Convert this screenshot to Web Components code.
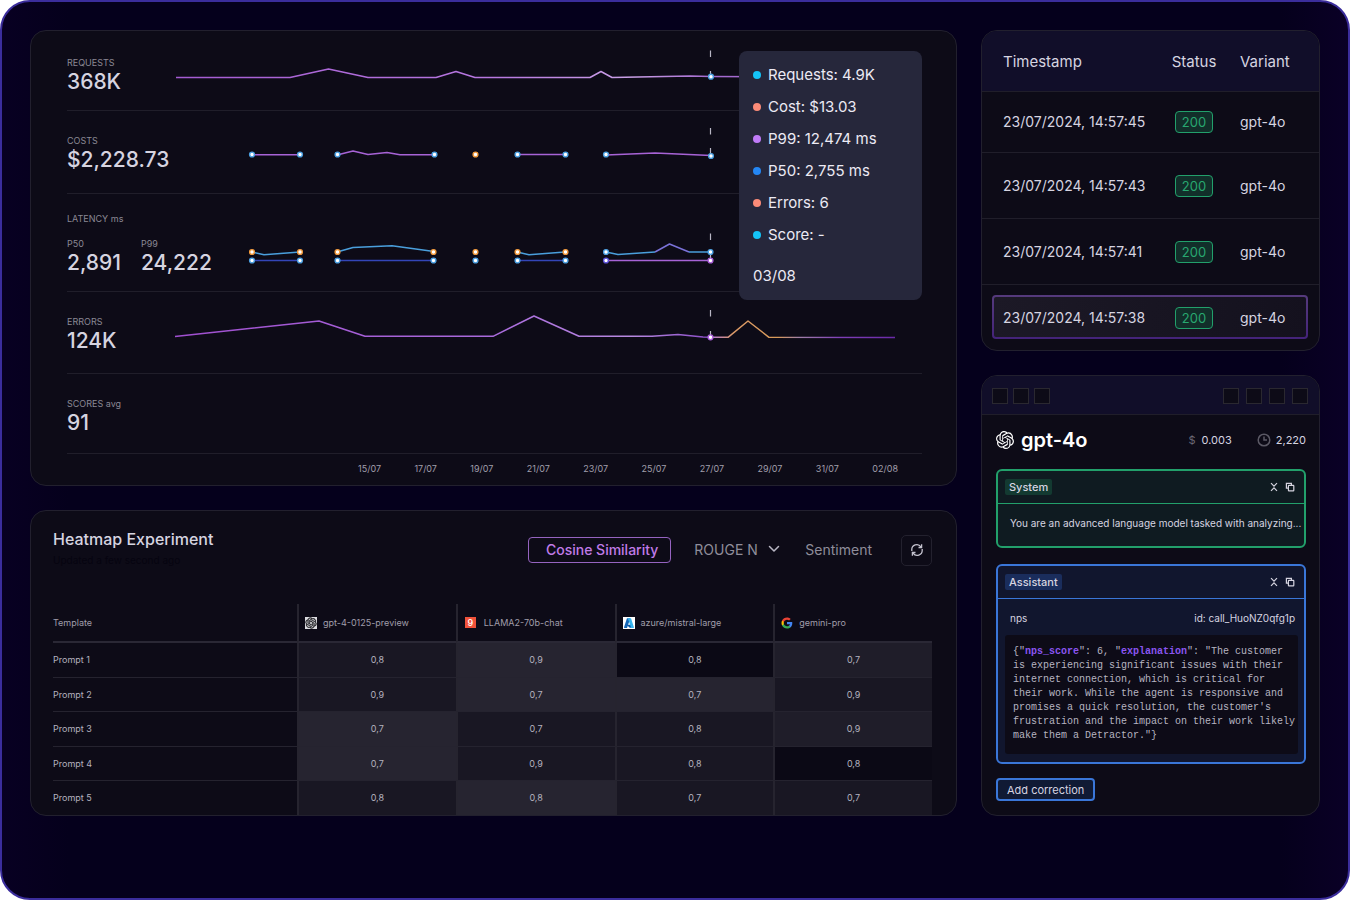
<!DOCTYPE html>
<html lang="en">
<head>
<meta charset="utf-8">
<meta name="viewport" content="width=device-width, initial-scale=1">
<title>LLM monitoring</title>
<style>
  :root {
    --panel: #0d0b17;
    --panel-head: #110e29;
    --line: #201e2a;
    --ink: #d6d4e0;
    --muted: #a09eab;
    --dim: #8a8894;
    --purple: #c07be8;
    --green: #22a06b;
    --blue: #3a76d8;
    --font: Inter, "Liberation Sans", sans-serif;
    --font-mono: "Liberation Mono", monospace;
  }

  body {
    margin: 0;
    background: #fff;
    color: var(--ink);
    font-family: var(--font);
  }
</style>
</head>
<body>
<app-frame>
  <metrics-panel slot="main"></metrics-panel>
  <heatmap-panel slot="main" fill></heatmap-panel>
  <requests-panel slot="side"></requests-panel>
  <trace-panel slot="side" fill></trace-panel>
</app-frame>

<script>
/* Registers an element whose shadow root is cloned from the given markup. */
function component(name, html, setup) {
  if (customElements.get(name)) return;
  const template = document.createElement("template");
  template.innerHTML = html;

  customElements.define(name, class extends HTMLElement {
    connectedCallback() {
      if (this.shadowRoot) return;
      const root = this.attachShadow({ mode: "open" });
      root.append(template.content.cloneNode(true));
      if (setup) setup(root, this);
    }
  });
}

const OPENAI = "M22.2819 9.8211a5.9847 5.9847 0 0 0-.5157-4.9108 6.0462 6.0462 0 0 0-6.5098-2.9A6.0651 6.0651 0 0 0 4.9807 4.1818a5.9847 5.9847 0 0 0-3.9977 2.9 6.0462 6.0462 0 0 0 .7427 7.0966 5.98 5.98 0 0 0 .511 4.9107 6.051 6.051 0 0 0 6.5146 2.9001A5.9847 5.9847 0 0 0 13.2599 24a6.0557 6.0557 0 0 0 5.7718-4.2058 5.9894 5.9894 0 0 0 3.9977-2.9001 6.0557 6.0557 0 0 0-.7475-7.0729zm-9.022 12.6081a4.4755 4.4755 0 0 1-2.8764-1.0408l.1419-.0804 4.7783-2.7582a.7948.7948 0 0 0 .3927-.6813v-6.7369l2.02 1.1686a.071.071 0 0 1 .038.052v5.5826a4.504 4.504 0 0 1-4.4945 4.4944zm-9.6607-4.1254a4.4708 4.4708 0 0 1-.5346-3.0137l.142.0852 4.783 2.7582a.7712.7712 0 0 0 .7806 0l5.8428-3.3685v2.3324a.0804.0804 0 0 1-.0332.0615L9.74 19.9502a4.4992 4.4992 0 0 1-6.1408-1.6464zM2.3408 7.8956a4.485 4.485 0 0 1 2.3655-1.9728V11.6a.7664.7664 0 0 0 .3879.6765l5.8144 3.3543-2.0201 1.1685a.0757.0757 0 0 1-.071 0l-4.8303-2.7865A4.504 4.504 0 0 1 2.3408 7.872zm16.5963 3.8558L13.1038 8.364 15.1192 7.2a.0757.0757 0 0 1 .071 0l4.8303 2.7913a4.4944 4.4944 0 0 1-.6765 8.1042v-5.6772a.79.79 0 0 0-.407-.667zm2.0107-3.0231l-.142-.0852-4.7735-2.7818a.7759.7759 0 0 0-.7854 0L9.409 9.2297V6.8974a.0662.0662 0 0 1 .0284-.0615l4.8303-2.7866a4.4992 4.4992 0 0 1 6.6802 4.66zM8.3065 12.863l-2.02-1.1638a.0804.0804 0 0 1-.038-.0567V6.0742a4.4992 4.4992 0 0 1 7.3757-3.4537l-.142.0805L8.704 5.459a.7948.7948 0 0 0-.3927.6813zm1.0976-2.3654l2.602-1.4998 2.6069 1.4998v2.9994l-2.5974 1.4997-2.6067-1.4997Z";

const ICONS = {
  openai: `<svg viewBox="0 0 24 24"><path fill="#fff" d="${OPENAI}"/></svg>`,
  gpt: `<svg viewBox="0 0 24 24"><rect width="24" height="24" fill="#dcdce0"/><path fill="#15151a" stroke="#15151a" stroke-width=".6" transform="translate(1 1) scale(.92)" d="${OPENAI}"/></svg>`,
  azure: `<svg viewBox="0 0 24 24">
    <rect width="24" height="24" fill="#fff"/>
    <path fill="#1467b8" d="M8.6 2.5h6L8.4 21.2a1 1 0 0 1-.9.7H3a1 1 0 0 1-.9-1.3L7.7 3.2a1 1 0 0 1 .9-.7z"/>
    <path fill="#0b5aa8" d="M16.5 15.5H8.6l-.4 1 5.3 5.2h5z"/>
    <path fill="#35b4ee" d="M16.2 3.2a1 1 0 0 0-.9-.7H9.5l6.4 18.1a1 1 0 0 1-.9 1.3h5.9a1 1 0 0 0 .9-1.3z"/></svg>`,
  google: `<svg viewBox="0 0 24 24">
    <path fill="#4285f4" d="M22.56 12.25c0-.78-.07-1.53-.2-2.25H12v4.26h5.92c-.26 1.37-1.04 2.53-2.21 3.31v2.77h3.57c2.08-1.92 3.28-4.74 3.28-8.09z"/>
    <path fill="#34a853" d="M12 23c2.97 0 5.46-.98 7.28-2.66l-3.57-2.77c-.98.66-2.23 1.06-3.71 1.06-2.86 0-5.29-1.93-6.16-4.53H2.18v2.84C3.99 20.53 7.7 23 12 23z"/>
    <path fill="#fbbc05" d="M5.84 14.09c-.22-.66-.35-1.36-.35-2.09s.13-1.43.35-2.09V7.07H2.18C1.43 8.55 1 10.22 1 12s.43 3.45 1.18 4.93l3.66-2.84z"/>
    <path fill="#ea4335" d="M12 5.38c1.62 0 3.06.56 4.21 1.64l3.15-3.15C17.45 2.09 14.97 1 12 1 7.7 1 3.99 3.47 2.18 7.07l3.66 2.84c.87-2.6 3.3-4.53 6.16-4.53z"/></svg>`,
  chevron: `<svg viewBox="0 0 12 12" fill="none" stroke="#b9b7c4" stroke-width="1.5" stroke-linecap="round" stroke-linejoin="round"><path d="M1.5 2.5 6 7l4.5-4.5"/></svg>`,
  refresh: `<svg viewBox="0 0 14 14" fill="none" stroke="#c4c2ce" stroke-width="1.3">
    <path d="M1.8 8V7A5 5 0 0 1 10.9 3.8M12.2 6V7A5 5 0 0 1 3.1 10.2"/>
    <path d="M11.6 1.2v3.3H8.5M2.4 12.8V9.5H5.5"/></svg>`,
  collapse: `<svg viewBox="0 0 10 10" fill="none" stroke="#d6d4e0" stroke-width="1.2"><path d="M2 1.2 5 4.2 8 1.2M2 8.8 5 5.8 8 8.8"/></svg>`,
  copy: `<svg viewBox="0 0 10 10" fill="none" stroke="#d6d4e0" stroke-width="1.2"><rect x="3.4" y="3.4" width="5.4" height="5.4" rx=".6"/><path d="M3.2 6.2H1.4V1.4h5v1.7"/></svg>`,
  clock: `<svg viewBox="0 0 14 14" fill="none" stroke="#5b5965" stroke-width="1.5"><circle cx="7" cy="7" r="5.8"/><path d="M7 3.5V7h3"/></svg>`
};

component("app-icon", `
  <style>
    :host { display: inline-block; flex: none; width: 12px; height: 12px; }
    svg { display: block; width: 100%; height: 100%; }
  </style>
`, (root, el) => {
  root.innerHTML += ICONS[el.getAttribute("name")] ?? "";
});

component("app-frame", `
  <style>
    :host {
      display: block;
      box-sizing: border-box;
      min-height: 100vh;
      padding: 28px;
      border: 2px solid #3b2d9c;
      border-radius: 30px;
      background: linear-gradient(90deg, #080022, #05001c 5%, #05001c 95%, #0a0026);
    }
    .grid {
      display: grid;
      grid-template-columns: minmax(0, 1fr) 339px;
      gap: 24px;
    }
    .col { display: flex; flex-direction: column; gap: 24px; min-width: 0; }
    ::slotted([fill]) { flex: 1; }
  </style>
  <div class="grid">
    <div class="col"><slot name="main"></slot></div>
    <div class="col"><slot name="side"></slot></div>
  </div>
`);

component("ui-panel", `
  <style>
    :host {
      display: block;
      box-sizing: border-box;
      overflow: hidden;
      border: 1px solid #22202e;
      border-radius: 16px;
      background: var(--panel);
    }
  </style>
  <slot></slot>
`);

/* One line of the overview: slotted figures on the left, a chart behind them. */
component("metric-row", `
  <style>
    :host {
      display: grid;
      border-bottom: 1px solid var(--line);
    }
    .head { grid-area: 1 / 1; padding-top: 23px; }
    :host([first]) .head { padding-top: 25px; }
    :host([split]) .head { padding-top: 18px; }
    .label { color: var(--dim); font-size: 9px; line-height: 14px; }
    :host([split]) .label { padding-bottom: 11px; }
    ::slotted(svg) { grid-area: 1 / 1; display: block; width: 100%; height: auto; }
  </style>
  <slot name="chart"></slot>
  <div class="head">
    <div class="label"></div>
    <slot></slot>
  </div>
`, (root, el) => {
  root.querySelector(".label").textContent = el.getAttribute("label");
});

component("big-number", `
  <style>
    :host { display: block; color: var(--ink); font-size: 21px; font-weight: 500; line-height: 24px; }
  </style>
  <slot></slot>
`);

component("chart-tooltip", `
  <style>
    :host {
      display: block;
      box-sizing: border-box;
      width: 183px;
      padding: 8px 14px;
      border-radius: 8px;
      background: #26273b;
      color: #eceaf4;
      font-size: 15px;
      line-height: 32px;
    }
    ul { margin: 0; padding: 0; list-style: none; }
    li { display: flex; align-items: center; gap: 7px; }
    li::before { content: ""; width: 8px; height: 8px; border-radius: 50%; background: var(--dot); }
    p { margin: 9px 0 0; }
  </style>
  <ul>
    <li style="--dot: #14c4f8">Requests: 4.9K</li>
    <li style="--dot: #fb8b78">Cost: $13.03</li>
    <li style="--dot: #c07bf8">P99: 12,474 ms</li>
    <li style="--dot: #2487f5">P50: 2,755 ms</li>
    <li style="--dot: #fb8b78">Errors: 6</li>
    <li style="--dot: #14c4f8">Score: -</li>
  </ul>
  <p>03/08</p>
`);

component("metrics-panel", `
  <style>
    :host { display: block; position: relative; }
    .rows { padding: 0 34px 0 36px; }
    .pair { display: flex; gap: 20px; }
    .pair span { display: block; color: var(--dim); font-size: 9px; line-height: 14px; }
    .axis {
      display: flex;
      justify-content: space-between;
      padding: 8px 24px 9px 291px;
      color: var(--muted);
      font-size: 9px;
      line-height: 14px;
    }
    chart-tooltip { position: absolute; top: 21px; right: 35px; }
    polyline { fill: none; stroke-width: 1.5; stroke-linejoin: round; }
    .p { stroke: #a763d6; }
    .c { stroke: #4a9fdc; }
    .i { stroke: #3345b8; }
    .cursor { stroke: #b8b6c4; stroke-width: 1.2; }
    circle { r: 2.4px; fill: #fff; stroke: #4a9fe0; stroke-width: 1.4; }
    circle.o { stroke: #f0983a; }
    circle.v { stroke: #a95fd8; }
    circle.n { stroke: #5a50d8; }
  </style>
  <ui-panel>
    <div class="rows">
      <metric-row label="REQUESTS" first>
        <big-number>368K</big-number>
        <svg slot="chart" viewBox="0 0 855 79">
          <defs>
            <linearGradient id="main" gradientUnits="userSpaceOnUse" x1="108" y1="0" x2="644" y2="0">
              <stop stop-color="#a45bd2"/><stop offset=".6" stop-color="#b778e0"/><stop offset=".85" stop-color="#c9a0e6"/><stop offset="1" stop-color="#a46ad0"/>
            </linearGradient>
          </defs>
          <polyline stroke="url(#main)" points="109,46.5 223,46.5 261.5,38 301,46.5 369,46.5 389,40.5 408,46.5 523,46.5 534,40.5 545,46.5 623,45 644,45.5 720,46"/>
          <path class="cursor" d="M643.5 19.5v6.5M643.5 40v5"/>
          <circle cx="644" cy="45.7"/>
        </svg>
      </metric-row>
      <metric-row label="COSTS">
        <big-number>$2,228.73</big-number>
        <svg slot="chart" viewBox="0 0 855 82">
          <polyline class="p" points="185,43.7 233,43.7"/>
          <polyline class="p" points="270,44 286,40 301,43.5 320,41.5 333,43.7 367,43.7"/>
          <polyline class="p" points="450,43.5 498,43.5"/>
          <polyline class="p" points="539,44 588,42 644,44.5"/>
          <path class="cursor" d="M643.5 17v6.5M643.5 37v7"/>
          <circle cx="185" cy="43.5"/><circle cx="233" cy="43.5"/>
          <circle cx="270.5" cy="43.5"/><circle cx="367.5" cy="43.5"/>
          <circle class="o" cx="408.5" cy="43.5"/>
          <circle cx="450.5" cy="43.5"/><circle cx="498.5" cy="43.5"/>
          <circle cx="539" cy="43.5"/><circle cx="644" cy="45"/>
        </svg>
      </metric-row>
      <metric-row label="LATENCY ms" split>
        <div class="pair">
          <div><span>P50</span><big-number>2,891</big-number></div>
          <div><span>P99</span><big-number>24,222</big-number></div>
        </div>
        <svg slot="chart" viewBox="0 0 855 97">
          <polyline class="c" points="185,58 197,60.7 233,58"/><polyline class="i" points="185,66.5 233,66.5"/>
          <polyline class="c" points="270,58 286,53.5 325,51.7 367,57.5"/><polyline class="i" points="270,66.5 367,66.5"/>
          <polyline class="c" points="450,58 462,60.7 498,58"/><polyline class="i" points="450,66.5 498,66.5"/>
          <polyline class="c" points="539,58 551,60.5 588,58"/>
          <polyline class="c" points="622,58 644,58"/>
          <polyline stroke="#7a72d8" points="588,58 602.5,50 622,58"/>
          <polyline class="p" points="539,66.5 644,66.5"/>
          <path class="cursor" d="M643.5 39.5v6.5M643.5 60v6"/>
          <circle class="o" cx="185" cy="58"/><circle class="o" cx="233" cy="58"/><circle cx="185" cy="66.5"/><circle cx="233" cy="66.5"/>
          <circle class="o" cx="270.5" cy="58"/><circle class="o" cx="366.5" cy="58"/><circle cx="270.5" cy="66.5"/><circle cx="366.5" cy="66.5"/>
          <circle class="o" cx="408.5" cy="58"/><circle cx="408.5" cy="66.5"/>
          <circle class="o" cx="450.5" cy="58"/><circle class="o" cx="498.5" cy="58"/><circle cx="450.5" cy="66.5"/><circle cx="498.5" cy="66.5"/>
          <circle cx="539" cy="58"/><circle cx="643.5" cy="58"/><circle class="n" cx="539" cy="66.5"/><circle class="v" cx="643.5" cy="66.5"/>
        </svg>
      </metric-row>
      <metric-row label="ERRORS">
        <big-number>124K</big-number>
        <svg slot="chart" viewBox="0 0 855 81">
          <defs>
            <linearGradient id="tail" gradientUnits="userSpaceOnUse" x1="644" y1="0" x2="828" y2="0">
              <stop stop-color="#b078d8"/><stop offset=".12" stop-color="#dc9a68"/><stop offset=".36" stop-color="#d89a58"/><stop offset=".48" stop-color="#a080a8"/><stop offset=".7" stop-color="#7f3fb8"/><stop offset="1" stop-color="#6a2aa8"/>
            </linearGradient>
            <linearGradient id="err" gradientUnits="userSpaceOnUse" x1="108" y1="0" x2="644" y2="0">
              <stop stop-color="#a04fd0"/><stop offset=".6" stop-color="#a96bdc"/><stop offset=".85" stop-color="#b78ae0"/><stop offset="1" stop-color="#8a4cc8"/>
            </linearGradient>
          </defs>
          <polyline stroke="url(#err)" points="108,44.5 252,29 298,44.3 426,44.3 467,24 512,44.3 585,44.3 611,42.5 636,45 644,45.3"/>
          <polyline stroke="url(#tail)" points="644,45.3 661,45.3 681,29 702,45.3 828,45.4"/>
          <path class="cursor" d="M643.5 18v6.5M643.5 39v5"/>
          <circle class="v" cx="643.5" cy="45.3"/>
        </svg>
      </metric-row>
      <metric-row label="SCORES avg">
        <big-number>91</big-number>
        <svg slot="chart" viewBox="0 0 855 79"></svg>
      </metric-row>
      <div class="axis">
        <span>15/07</span><span>17/07</span><span>19/07</span><span>21/07</span><span>23/07</span>
        <span>25/07</span><span>27/07</span><span>29/07</span><span>31/07</span><span>02/08</span>
      </div>
    </div>
  </ui-panel>
  <chart-tooltip></chart-tooltip>
`);

/* Score per prompt and model. Each cell is [score, shade 0-3]. */
const HEATMAP = [
  ["Prompt 1", ["0,8", 1], ["0,9", 3], ["0,8", 0], ["0,7", 2]],
  ["Prompt 2", ["0,9", 1], ["0,7", 3], ["0,7", 3], ["0,9", 1]],
  ["Prompt 3", ["0,7", 3], ["0,7", 1], ["0,8", 1], ["0,9", 2]],
  ["Prompt 4", ["0,7", 3], ["0,9", 1], ["0,8", 1], ["0,8", 0]],
  ["Prompt 5", ["0,8", 1], ["0,8", 3], ["0,7", 1], ["0,7", 1]]
];

component("heatmap-panel", `
  <style>
    :host { display: flex; }
    ui-panel { flex: 1; min-width: 0; padding: 18px 24px 0 22px; }
    header { display: flex; justify-content: space-between; }
    h2 { margin: 0; font-size: 16px; font-weight: 500; line-height: 20px; }
    header p { margin: 4px 0 0; color: #060410; font-size: 10px; line-height: 14px; }
    .tools { display: flex; align-items: center; padding-top: 4px; }
    button, select {
      margin: 0;
      padding: 0;
      border: 0;
      background: none;
      color: #8f8d9a;
      font: 400 14px/20px var(--font);
    }
    .tools .active {
      height: 26px;
      padding: 0 12px 0 17px;
      border: 1px solid #9563c0;
      border-radius: 4px;
      color: var(--purple);
      font-weight: 500;
    }
    label { display: grid; align-items: center; margin: 0 25px 0 23px; }
    select { grid-area: 1 / 1; appearance: none; padding-right: 22px; }
    label app-icon { grid-area: 1 / 1; justify-self: end; pointer-events: none; }
    .tools .refresh {
      display: grid;
      place-items: center;
      width: 31px;
      height: 31px;
      margin-left: 29px;
      border: 1px solid #23212e;
      border-radius: 5px;
    }
    .refresh app-icon { width: 14px; height: 14px; }
    table {
      width: 100%;
      margin-top: 37px;
      border-spacing: 0;
      table-layout: fixed;
      color: #b4b2bf;
      font-size: 9px;
      line-height: 12px;
    }
    th { padding: 0; font-weight: 400; text-align: left; }
    th:first-child { width: 244px; }
    thead th { height: 37px; border-bottom: 2px solid #2a2835; color: #a09eab; }
    thead th + th, td { border-left: 2px solid #26242f; }
    tbody th, td { height: 34px; padding: 0; border-bottom: 1px solid #25232f; }
    tbody tr:nth-child(even) > * { height: 33px; }
    tbody tr:last-child > * { border-bottom: 0; }
    td { text-align: center; }
    .model { display: flex; align-items: center; gap: 6px; padding-left: 6px; }
    .model b {
      width: 11px;
      height: 11px;
      margin: 0 2px 0 1px;
      background: #f0523a;
      color: #fff;
      font-size: 9px;
      font-weight: 500;
      line-height: 11px;
      text-align: center;
    }
    .s0 { background: #0b0915; }
    .s1 { background: #191723; }
    .s2 { background: #1f1d29; }
    .s3 { background: #262430; }
  </style>
  <ui-panel>
    <header>
      <div>
        <h2>Heatmap Experiment</h2>
        <p>Updated a few second ago</p>
      </div>
      <div class="tools">
        <button class="active" type="button">Cosine Similarity</button>
        <label><select aria-label="ROUGE metric"><option>ROUGE N</option></select><app-icon name="chevron"></app-icon></label>
        <button type="button">Sentiment</button>
        <button class="refresh" type="button" aria-label="Refresh"><app-icon name="refresh"></app-icon></button>
      </div>
    </header>
    <table>
      <thead>
        <tr>
          <th scope="col">Template</th>
          <th scope="col"><div class="model"><app-icon name="gpt"></app-icon>gpt-4-0125-preview</div></th>
          <th scope="col"><div class="model"><b>9</b>LLAMA2-70b-chat</div></th>
          <th scope="col"><div class="model"><app-icon name="azure"></app-icon>azure/mistral-large</div></th>
          <th scope="col"><div class="model"><app-icon name="google"></app-icon>gemini-pro</div></th>
        </tr>
      </thead>
      <tbody></tbody>
    </table>
  </ui-panel>
`, (root) => {
  root.querySelector("tbody").innerHTML = HEATMAP.map(([name, ...cells]) =>
    `<tr><th scope="row">${name}</th>${cells.map(([v, s]) => `<td class="s${s}">${v}</td>`).join("")}</tr>`
  ).join("");
});

component("status-badge", `
  <style>
    :host {
      display: inline-block;
      box-sizing: border-box;
      width: 38px;
      border: 1px solid var(--green);
      border-radius: 4px;
      background: #122f2a;
      color: #28a870;
      font-size: 13px;
      line-height: 20px;
      text-align: center;
      vertical-align: middle;
    }
  </style>
  <slot></slot>
`);

component("requests-panel", `
  <style>
    :host { display: block; }
    table {
      width: 100%;
      border-spacing: 0;
      table-layout: fixed;
      font-size: 14px;
      line-height: 20px;
      white-space: nowrap;
    }
    th, td { height: 65px; padding: 0; border-bottom: 1px solid var(--line); font-weight: 400; text-align: left; }
    th { height: 58px; padding-top: 2px; background: var(--panel-head); font-size: 15px; }
    tbody tr:first-child td { height: 60px; }
    tbody tr:last-child td { height: 65px; border-bottom: 0; }
    th:nth-child(1) { width: 182px; }
    th:nth-child(2) { width: 60px; }
    tr > :nth-child(1) { box-sizing: border-box; padding-left: 21px; }
    tr > :nth-child(2) { text-align: center; }
    tr > :nth-child(3) { padding-left: 16px; }
    .selected { position: relative; z-index: 0; }
    .selected td:first-child::before {
      content: "";
      position: absolute;
      z-index: -1;
      inset: 10px 11px 11px 10px;
      border: 2px solid transparent;
      border-radius: 4px;
      background:
        linear-gradient(100deg, #1c1926, #14111e) padding-box,
        linear-gradient(#553a7c, #44237a) border-box;
    }
  </style>
  <ui-panel>
    <table>
      <thead><tr><th scope="col">Timestamp</th><th scope="col">Status</th><th scope="col">Variant</th></tr></thead>
      <tbody></tbody>
    </table>
  </ui-panel>
`, (root) => {
  root.querySelector("tbody").innerHTML = ["45", "43", "41", "38"].map((sec) =>
    `<tr${sec === "38" ? ' class="selected"' : ""}>
      <td>23/07/2024, 14:57:${sec}</td><td><status-badge>200</status-badge></td><td>gpt-4o</td>
    </tr>`
  ).join("");
});

component("message-card", `
  <style>
    :host {
      --tone: var(--green);
      --fill: #0f1b21;
      --tag: #133a31;
      display: block;
      border: 2px solid var(--tone);
      border-radius: 6px;
      background: var(--fill);
    }
    :host([tone="blue"]) { --tone: var(--blue); --fill: #11162e; --tag: #1a2d5c; }
    header {
      display: flex;
      align-items: center;
      gap: 6px;
      padding: 8px 9px 8px 7px;
      border-bottom: 1px solid var(--tone);
    }
    .role {
      margin-right: auto;
      padding: 0 4px;
      border-radius: 2px;
      background: var(--tag);
      font-size: 11px;
      font-weight: 500;
      line-height: 16px;
    }
    button { display: block; margin: 0; padding: 0; border: 0; background: none; }
    app-icon { display: block; width: 10px; height: 10px; }
  </style>
  <header>
    <span class="role"></span>
    <button type="button" aria-label="Collapse"><app-icon name="collapse"></app-icon></button>
    <button type="button" aria-label="Copy"><app-icon name="copy"></app-icon></button>
  </header>
  <slot></slot>
`, (root, el) => {
  root.querySelector(".role").textContent = el.getAttribute("role-name");
});

component("trace-panel", `
  <style>
    :host { display: flex; }
    ui-panel { flex: 1; min-width: 0; }
    .bar {
      display: flex;
      justify-content: space-between;
      padding: 12px 11px 10px 10px;
      border-bottom: 1px solid var(--line);
      background: var(--panel-head);
    }
    .bar div { display: flex; gap: 5px; }
    .bar div + div { gap: 7px; }
    .bar i { box-sizing: border-box; width: 16px; height: 16px; border: 1px solid #2a2830; background: var(--panel); }
    .body { padding: 13px 13px 14px 14px; }
    .title { display: flex; align-items: center; margin-bottom: 17px; font-size: 11px; line-height: 24px; }
    .title app-icon { width: 18px; height: 18px; }
    h2 { margin: 0 auto 0 7px; color: #fff; font-size: 20px; font-weight: 600; line-height: 24px; }
    .cost { color: #6b6975; }
    .cost b { margin: 0 25px 0 6px; color: var(--ink); font-weight: 400; }
    .title .clock { width: 14px; height: 14px; margin-right: 5px; }
    .text { margin: 0; padding: 12px 0 16px 12px; overflow: hidden; font-size: 10px; line-height: 14px; white-space: nowrap; }
    message-card + message-card { margin-top: 16px; }
    .call { display: flex; justify-content: space-between; padding: 12px 9px 10px 12px; font-size: 10px; line-height: 14px; }
    pre {
      margin: 0 6px 8px 7px;
      padding: 10px 0 11px 8px;
      border-radius: 3px;
      background: var(--panel);
      color: #b6b4c1;
      font: 10px/14px var(--font-mono);
    }
    pre span { display: block; }
    pre b { color: #8a55f0; }
    .add {
      display: block;
      height: 23px;
      margin-top: 14px;
      padding: 0 9px;
      border: 2px solid var(--blue);
      border-radius: 4px;
      background: #101a34;
      color: var(--ink);
      font: 11px/18px var(--font);
    }
  </style>
  <ui-panel>
    <div class="bar"><div><i></i><i></i><i></i></div><div><i></i><i></i><i></i><i></i></div></div>
    <div class="body">
      <div class="title">
        <app-icon name="openai"></app-icon>
        <h2>gpt-4o</h2>
        <span class="cost">$<b>0.003</b></span>
        <app-icon class="clock" name="clock"></app-icon>
        <span>2,220</span>
      </div>
      <message-card role-name="System">
        <p class="text">You are an advanced language model tasked with analyzing...</p>
      </message-card>
      <message-card role-name="Assistant" tone="blue">
        <div class="call"><span>nps</span><span>id: call_HuoNZ0qfg1p</span></div>
        <pre><span>{"<b>nps_score</b>": 6, "<b>explanation</b>": "The customer</span><span>is experiencing significant issues with their</span><span>internet connection, which is critical for</span><span>their work. While the agent is responsive and</span><span>promises a quick resolution, the customer's</span><span>frustration and the impact on their work likely</span><span>make them a Detractor."}</span></pre>
      </message-card>
      <button class="add" type="button">Add correction</button>
    </div>
  </ui-panel>
`);
</script>
</body>
</html>
